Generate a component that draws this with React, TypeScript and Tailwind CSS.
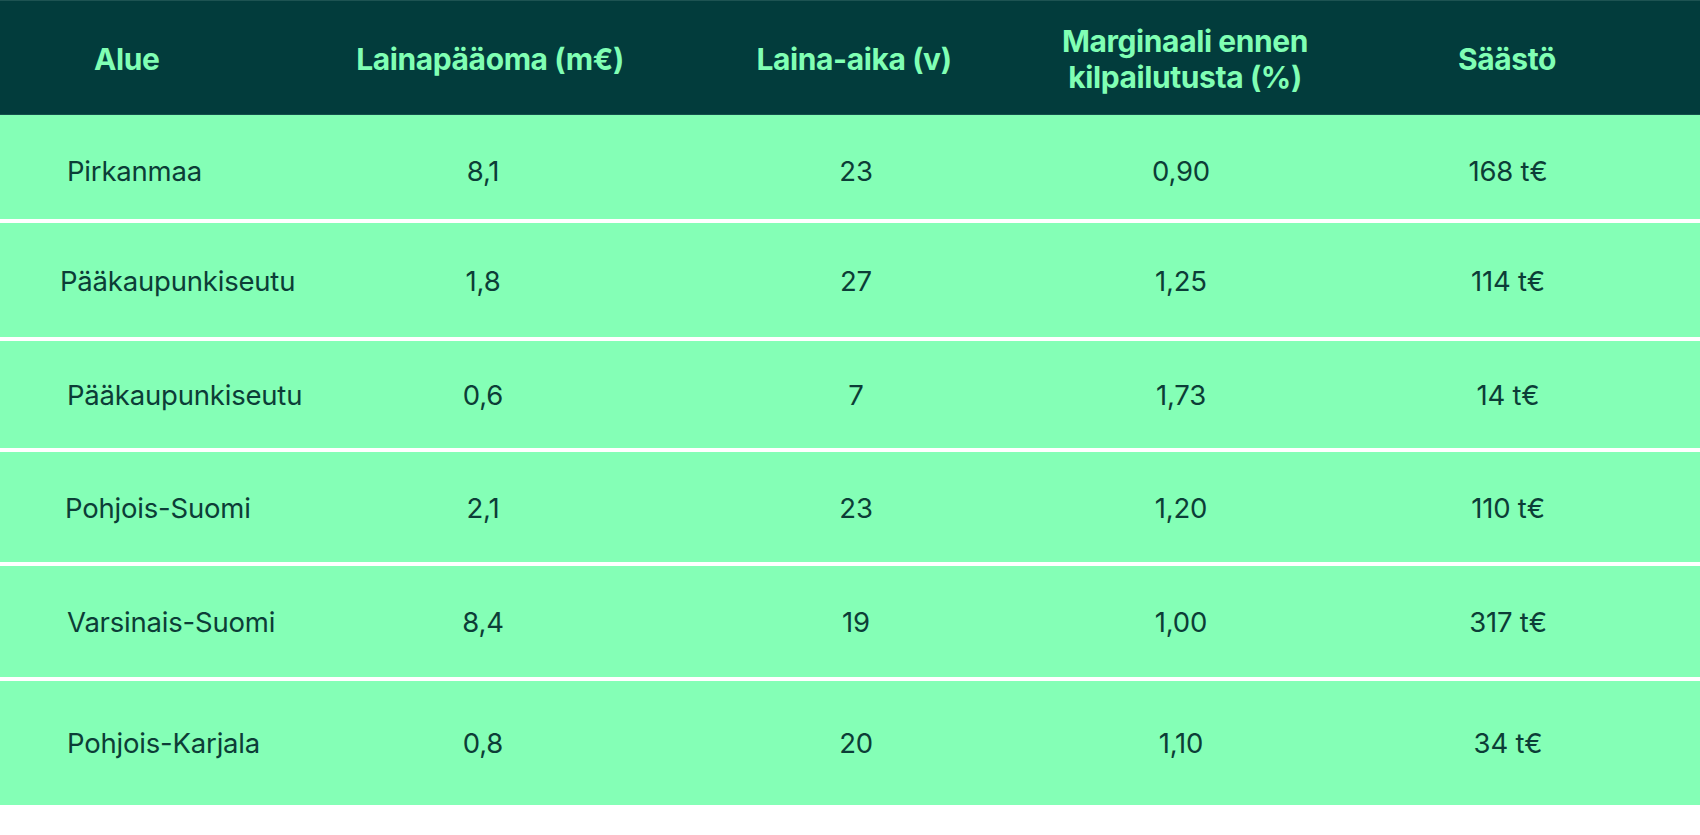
import React from "react";

type Row = {
  alue: string;
  pad: string;
  h: string;
  pt: string;
  a: string;
  b: string;
  c: string;
  d: string;
};

const rows: Row[] = [
  { alue: "Pirkanmaa", pad: "pl-[67px]", h: "h-[104px]", pt: "pt-[8px]", a: "8,1", b: "23", c: "0,90", d: "168 t€" },
  { alue: "Pääkaupunkiseutu", pad: "pl-[60px]", h: "h-[114px]", pt: "pt-[2px]", a: "1,8", b: "27", c: "1,25", d: "114 t€" },
  { alue: "Pääkaupunkiseutu", pad: "pl-[67px]", h: "h-[107px]", pt: "pt-0", a: "0,6", b: "7", c: "1,73", d: "14 t€" },
  { alue: "Pohjois-Suomi", pad: "pl-[65px]", h: "h-[110px]", pt: "pt-[1px]", a: "2,1", b: "23", c: "1,20", d: "110 t€" },
  { alue: "Varsinais-Suomi", pad: "pl-[67px]", h: "h-[111px]", pt: "pt-[1px]", a: "8,4", b: "19", c: "1,00", d: "317 t€" },
  { alue: "Pohjois-Karjala", pad: "pl-[67px]", h: "h-[124px]", pt: "pt-0", a: "0,8", b: "20", c: "1,10", d: "34 t€" },
];

const grid = "grid grid-cols-[310px_346px_400px_250px_394px]";

export default function App() {
  return (
    <div
      className="w-[1700px] h-[835px] bg-white"
      style={{ fontFamily: "Inter, 'Liberation Sans', sans-serif" }}
    >
      <div
        className={`${grid} h-[115px] bg-[#023c3c] border-t border-[#1d5352] border-b border-b-[#15504d] text-[#80ffb4] font-bold text-[30px] leading-[36px] tracking-[-0.4px] whitespace-nowrap`}
      >
        <div className="flex items-center pl-[94px] pt-[2px]">Alue</div>
        <div className="flex items-center justify-center pl-[14px] pt-[2px]">Lainapääoma (m€)</div>
        <div className="flex items-center justify-center pr-[4px] pt-[2px]">Laina-aika (v)</div>
        <div className="flex items-center justify-center text-center pl-[8px] pt-[2px]">
          <span>
            Marginaali ennen
            <br />
            kilpailutusta (%)
          </span>
        </div>
        <div className="flex items-center justify-center pl-[8px] pt-[2px]">Säästö</div>
      </div>
      <div className="flex flex-col gap-[4px]">
        {rows.map((r, i) => (
          <div
            key={i}
            className={`${grid} ${r.h} ${r.pt} bg-[#84ffb6] text-[#0c3d37] text-[27.5px] leading-[34px] tracking-[-0.2px] whitespace-nowrap`}
          >
            <div className={`flex items-center ${r.pad}`}>{r.alue}</div>
            <div className="flex items-center justify-center">{r.a}</div>
            <div className="flex items-center justify-center">{r.b}</div>
            <div className="flex items-center justify-center">{r.c}</div>
            <div className="flex items-center justify-center pl-[10px]">{r.d}</div>
          </div>
        ))}
      </div>
    </div>
  );
}
